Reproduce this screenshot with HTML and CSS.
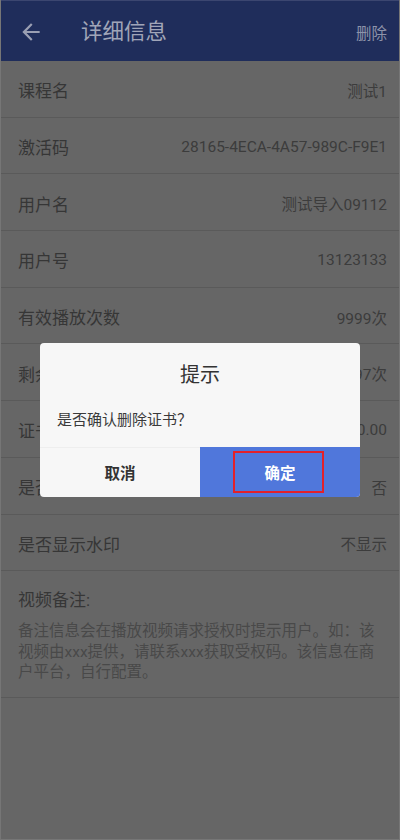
FILE: index.html
```html
<!DOCTYPE html>
<html lang="zh-CN">
<head>
<meta charset="utf-8">
<title>详细信息</title>
<link rel="stylesheet" href="styles.css">
</head>
<body>
<div class="screen">
  <header class="appbar">
    <svg class="back" viewBox="0 0 24 24" width="26" height="26" aria-hidden="true">
      <path d="M20 11H7.83l5.59-5.59L12 4l-8 8 8 8 1.41-1.41L7.83 13H20v-2z" fill="currentColor"/>
    </svg>
    <div class="appbar-title">详细信息</div>
    <div class="appbar-action">删除</div>
  </header>

  <div class="list">
    <div class="row"><span class="label">课程名</span><span class="value">测试1</span></div>
    <div class="row"><span class="label">激活码</span><span class="value">28165-4ECA-4A57-989C-F9E1</span></div>
    <div class="row"><span class="label">用户名</span><span class="value">测试导入09112</span></div>
    <div class="row"><span class="label">用户号</span><span class="value">13123133</span></div>
    <div class="row"><span class="label">有效播放次数</span><span class="value">9999次</span></div>
    <div class="row"><span class="label">剩余播放次数</span><span class="value">9997次</span></div>
    <div class="row"><span class="label">证书价格</span><span class="value">100.00</span></div>
    <div class="row"><span class="label">是否可下载</span><span class="value">否</span></div>
    <div class="row"><span class="label">是否显示水印</span><span class="value">不显示</span></div>
  </div>

  <section class="note">
    <div class="note-title">视频备注:</div>
    <p class="note-body">备注信息会在播放视频请求授权时提示用户。如：该视频由xxx提供，请联系xxx获取受权码。该信息在商户平台，自行配置。</p>
  </section>

  <div class="modal">
    <div class="dialog">
      <div class="dialog-title">提示</div>
      <div class="dialog-msg">是否确认删除证书？</div>
      <div class="dialog-actions">
        <div class="btn btn-cancel">取消</div>
        <div class="btn btn-ok">确定<span class="highlight"></span></div>
      </div>
    </div>
  </div>
</div>
</body>
</html>
```

FILE: styles.css
```css
html, body {
  margin: 0;
  padding: 0;
}

body {
  font-family: Roboto, "Noto Sans CJK SC", sans-serif;
  background: #666666;
}

.screen {
  position: relative;
  width: 400px;
  height: 840px;
  box-sizing: border-box;
  background: #666666;
  border-left: 1px solid #767676;
  border-right: 1px solid #767676;
  border-bottom: 1px solid #767676;
  overflow: hidden;
}

.appbar {
  height: 61px;
  box-sizing: border-box;
  padding-top: 2px;
  background: #1f2d5b;
  border-top: 1px solid #3b4670;
  display: flex;
  align-items: center;
}

.back {
  color: #9a9fb3;
  margin-left: 17px;
  flex: none;
}

.appbar-title {
  margin-left: 37px;
  font-size: 21.5px;
  color: #a0a5b8;
  line-height: 28px;
}

.appbar-action {
  margin-left: auto;
  margin-right: 12px;
  font-size: 15.5px;
  color: #8e94aa;
}

.row {
  height: 56.7px;
  box-sizing: border-box;
  padding: 2px 12px 0 17px;
  border-bottom: 1px solid #5a5a5a;
  display: flex;
  align-items: center;
  justify-content: space-between;
}

.label {
  font-size: 17px;
  color: #363636;
}

.value {
  font-size: 15.5px;
  color: #3c3c3c;
}

.note {
  padding: 17px 13px 14px 17px;
  border-bottom: 1px solid #5a5a5a;
}

.note-title {
  font-size: 17px;
  line-height: 24px;
  color: #363636;
}

.note-body {
  margin: 9px 0 0;
  font-size: 15.5px;
  line-height: 20.5px;
  color: #494949;
}

.modal {
  position: absolute;
  inset: 0;
  display: flex;
  align-items: center;
  justify-content: center;
}

.dialog {
  width: 320px;
  background: #f7f7f7;
  border-radius: 4px;
  overflow: hidden;
}

.dialog-title {
  padding-top: 20px;
  font-size: 20px;
  line-height: 24px;
  text-align: center;
  color: #333333;
}

.dialog-msg {
  padding: 22px 17px 16px;
  font-size: 15px;
  line-height: 22px;
  color: #3a3a3a;
}

.dialog-actions {
  display: flex;
  height: 50px;
}

.btn {
  flex: 1;
  display: flex;
  align-items: center;
  justify-content: center;
  font-size: 15.5px;
  font-weight: 700;
}

.btn-cancel {
  color: #333333;
  border-top: 1px solid #eeeeee;
  box-sizing: border-box;
}

.btn-ok {
  position: relative;
  background: #5077db;
  color: #ffffff;
}

.highlight {
  position: absolute;
  left: 33px;
  top: 4px;
  width: 91px;
  height: 42px;
  box-sizing: border-box;
  border: 2px solid #e3202a;
}
```
